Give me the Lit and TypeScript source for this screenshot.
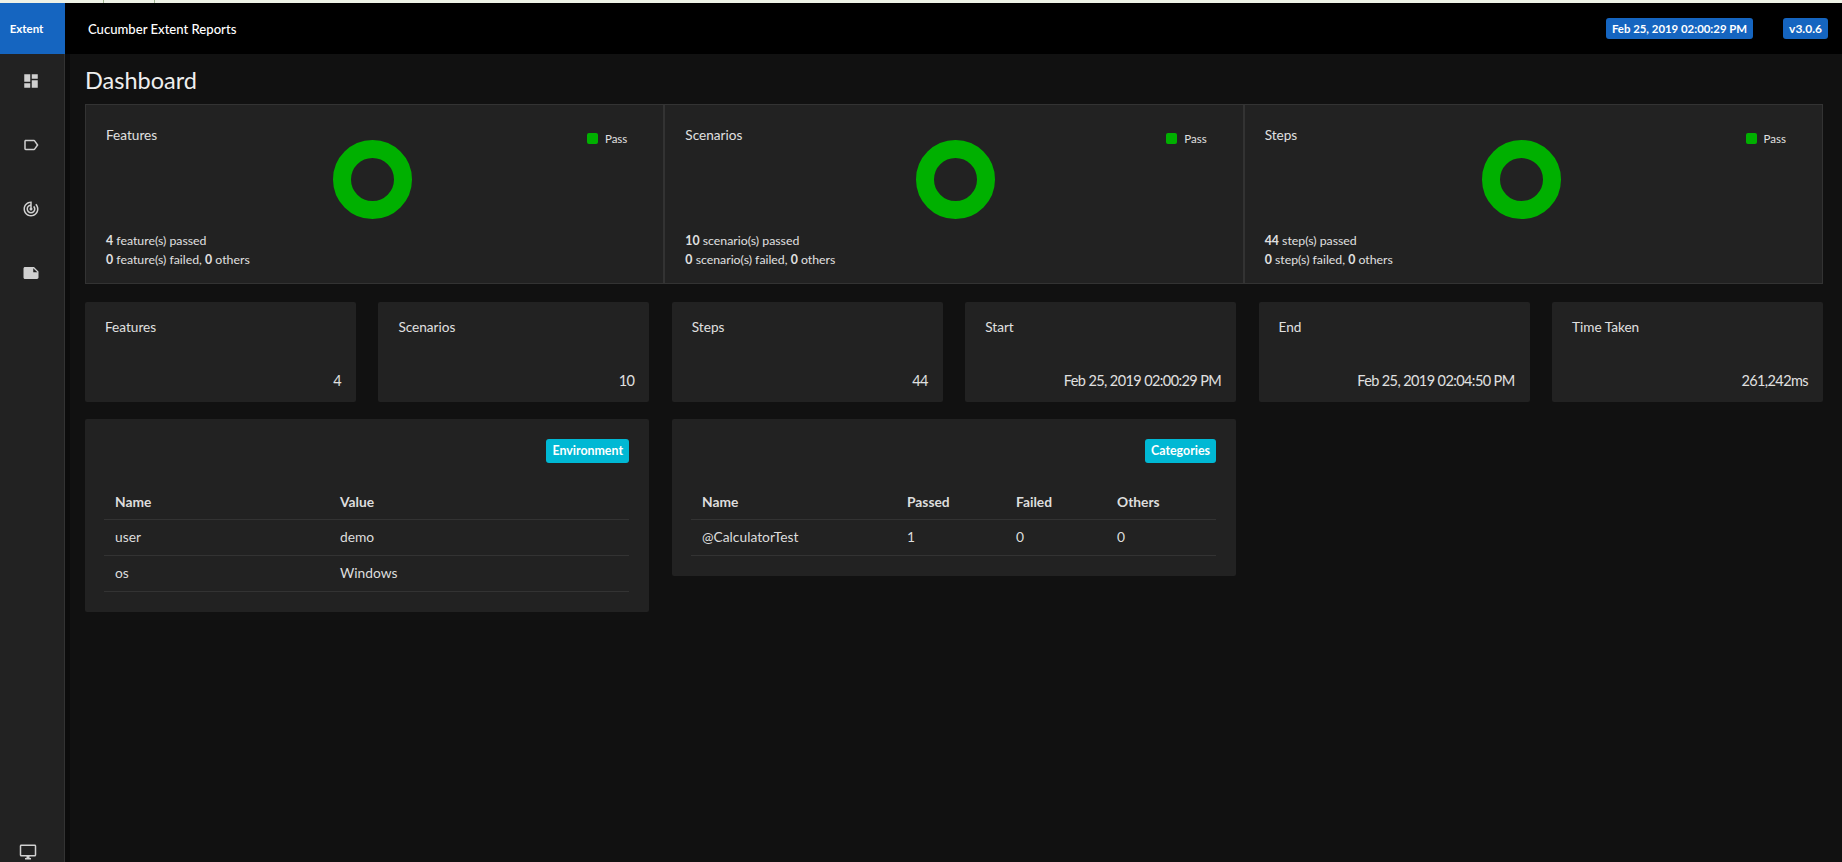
import { LitElement, html, css, svg } from "lit";
import { customElement } from "lit/decorators.js";

const ICONS = {
  dashboard: "M3 13h8V3H3v10zm0 8h8v-6H3v6zm10 0h8V11h-8v10zm0-18v6h8V3h-8z",
  label: "M17.63 5.84C17.27 5.33 16.67 5 16 5L5 5.01C3.9 5.01 3 5.9 3 7v10c0 1.1.9 1.99 2 1.99L16 19c.67 0 1.27-.33 1.63-.84L22 12l-4.37-6.16zM16 17H5V7h11l3.55 5L16 17z",
  track: "M19.07 4.93l-1.41 1.41C19.1 7.79 20 9.79 20 12c0 4.42-3.58 8-8 8s-8-3.58-8-8c0-4.08 3.05-7.44 7-7.93v2.02C8.16 6.57 6 9.03 6 12c0 3.31 2.69 6 6 6s6-2.69 6-6c0-1.66-.67-3.16-1.76-4.24l-1.41 1.41C15.55 9.9 16 10.9 16 12c0 2.21-1.79 4-4 4s-4-1.79-4-4c0-1.86 1.28-3.41 3-3.86v2.14c-.6.35-1 .98-1 1.72 0 1.1.9 2 2 2s2-.9 2-2c0-.74-.4-1.38-1-1.72V2h-1C6.48 2 2 6.48 2 12s4.48 10 10 10 10-4.48 10-10c0-2.76-1.12-5.26-2.93-7.07z",
  note: "M22 10l-6-6H4c-1.1 0-2 .9-2 2v12.01c0 1.1.9 1.99 2 1.99l16-.01c1.1 0 2-.89 2-1.99v-8zm-7-4.5l5.5 5.5H15V5.5z",
  desktop: "M21 2H3c-1.1 0-2 .9-2 2v12c0 1.1.9 2 2 2h7v2H8v2h8v-2h-2v-2h7c1.1 0 2-.9 2-2V4c0-1.1-.9-2-2-2zm0 14H3V4h18v12z",
};

const icon = (d: string, size = 18) =>
  html`<svg class="icon" width=${size} height=${size} viewBox="0 0 24 24">${svg`<path d=${d}></path>`}</svg>`;

const CHARTS = [
  { title: "Features", n: "4", noun: "feature", donut: 227 },
  { title: "Scenarios", n: "10", noun: "scenario", donut: 231 },
  { title: "Steps", n: "44", noun: "step", donut: 217 },
];

const STATS = [
  ["Features", "4"],
  ["Scenarios", "10"],
  ["Steps", "44"],
  ["Start", "Feb 25, 2019 02:00:29 PM"],
  ["End", "Feb 25, 2019 02:04:50 PM"],
  ["Time Taken", "261,242ms"],
];

@customElement("app-root")
export class AppRoot extends LitElement {
  static styles = css`
    :host {
      display: flex;
      flex-direction: column;
      width: 1842px;
      height: 862px;
      overflow: hidden;
      background: #111;
      color: #e0e0e0;
      font-family: "Lato", "Noto Sans", sans-serif;
      font-size: 13px;
    }
    .strip {
      height: 3px;
      background: #eef2e6;
      display: flex;
      padding-left: 103px;
      gap: 50px;
      flex: none;
    }
    .strip i {
      width: 1px;
      background: #9fb592;
    }
    .top {
      height: 51px;
      flex: none;
      background: #000;
      display: flex;
      align-items: center;
    }
    .logo {
      width: 65px;
      height: 51px;
      box-sizing: border-box;
      padding-right: 12px;
      background: #1565c0;
      color: #fff;
      font-weight: 700;
      font-size: 11.5px;
      display: flex;
      align-items: center;
      justify-content: center;
    }
    .brand {
      margin-left: 23px;
      color: #fff;
      font-size: 13.1px;
      font-weight: 500;
      flex: 1;
    }
    .pill {
      background: #1565c0;
      color: #fff;
      font-weight: 700;
      font-size: 11.4px;
      height: 21px;
      line-height: 21px;
      border-radius: 3px;
      padding: 0 6px;
    }
    .pill.ver {
      margin: 0 14px 0 30px;
      font-size: 12px;
    }
    .body {
      flex: 1;
      display: flex;
      min-height: 0;
    }
    .side {
      flex: none;
      background: #222;
      border-right: 1px solid #333;
      box-shadow: 5px 0 0 #0c0c0c;
      display: flex;
      flex-direction: column;
      align-items: center;
      padding: 18px 3px 0 0;
      width: 61px;
    }
    .side .item {
      height: 18px;
      margin-bottom: 46px;
      display: flex;
    }
    .side .item.end {
      margin: auto 6px 2px 0;
      height: 17px;
    }
    .icon {
      fill: #d0d0d0;
      display: block;
    }
    main {
      flex: 1;
      min-width: 0;
      padding: 0 19px 0 20px;
    }
    h1 {
      margin: 0;
      font-size: 23.5px;
      font-weight: 400;
      color: #eee;
      height: 50px;
      line-height: 53px;
    }
    .charts {
      display: grid;
      grid-template-columns: repeat(3, 1fr);
    }
    .chart {
      height: 180px;
      box-sizing: border-box;
      background: #222;
      border: 1px solid #333;
      padding: 20px 20px 14px;
      display: grid;
    }
    .chart > * {
      grid-area: 1 / 1;
    }
    .ctitle {
      font-size: 13.6px;
      line-height: 20px;
    }
    .legend {
      justify-self: end;
      display: flex;
      align-items: center;
      gap: 7px;
      font-size: 11.5px;
      height: 20px;
      margin: 3px 16px 0 0;
      align-self: start;
    }
    .legend b {
      width: 11px;
      height: 11px;
      border-radius: 2px;
      background: #00b000;
    }
    .donut {
      align-self: start;
      justify-self: start;
      box-sizing: border-box;
      width: 79px;
      height: 79px;
      margin-top: 15px;
      border-radius: 50%;
      border: 18px solid #00b000;
    }
    .foot {
      align-self: end;
      font-size: 12.3px;
      line-height: 19px;
    }
    .foot strong {
      font-weight: 700;
    }
    .stats {
      display: grid;
      grid-template-columns: repeat(6, 1fr);
      column-gap: 22.4px;
      margin-top: 18px;
    }
    .stat {
      height: 100px;
      box-sizing: border-box;
      background: #222;
      border-radius: 2px;
      padding: 15px 15px 0 20px;
      display: flex;
      flex-direction: column;
      justify-content: space-between;
    }
    .stat .t {
      font-size: 13.6px;
      line-height: 20px;
    }
    .stat .v {
      text-align: right;
      font-size: 14.5px;
      letter-spacing: -0.6px;
      line-height: 20px;
      margin-bottom: 11px;
    }
    .panels {
      display: grid;
      grid-template-columns: 564px 564px;
      column-gap: 23px;
      margin-top: 17px;
      align-items: start;
    }
    .panel {
      background: #222;
      border-radius: 2px;
      padding: 20px 20px 20px 19px;
    }
    .phead {
      display: flex;
      justify-content: flex-end;
    }
    .badge {
      background: #00b8d4;
      color: #fff;
      font-weight: 700;
      font-size: 12.4px;
      height: 24px;
      line-height: 24px;
      padding: 0 6px;
      border-radius: 3px;
    }
    table {
      width: 100%;
      border-collapse: collapse;
      table-layout: fixed;
      margin-top: 20px;
      font-size: 13.8px;
    }
    th,
    td {
      text-align: left;
      padding: 0 11px;
      border-bottom: 1px solid #333;
      color: #ddd;
    }
    th {
      height: 36px;
      font-weight: 700;
      padding-top: 2px;
      box-sizing: border-box;
    }
    td {
      height: 36px;
      padding-bottom: 1px;
      box-sizing: border-box;
    }
  `;

  render() {
    return html`
      <div class="strip"><i></i><i></i></div>
      <header class="top">
        <div class="logo">Extent</div>
        <div class="brand">Cucumber Extent Reports</div>
        <div class="pill">Feb 25, 2019 02:00:29 PM</div>
        <div class="pill ver">v3.0.6</div>
      </header>
      <div class="body">
        <nav class="side">
          <div class="item">${icon(ICONS.dashboard)}</div>
          <div class="item">${icon(ICONS.label)}</div>
          <div class="item">${icon(ICONS.track)}</div>
          <div class="item">${icon(ICONS.note)}</div>
          <div class="item end">${icon(ICONS.desktop)}</div>
        </nav>
        <main>
          <h1>Dashboard</h1>
          <section class="charts">
            ${CHARTS.map(
              (c) => html`
                <div class="chart">
                  <div class="ctitle">${c.title}</div>
                  <div class="legend"><b></b>Pass</div>
                  <div class="donut" style="margin-left:${c.donut}px"></div>
                  <div class="foot">
                    <div><strong>${c.n}</strong> ${c.noun}(s) passed</div>
                    <div><strong>0</strong> ${c.noun}(s) failed, <strong>0</strong> others</div>
                  </div>
                </div>
              `
            )}
          </section>
          <section class="stats">
            ${STATS.map(
              ([t, v]) => html`<div class="stat"><div class="t">${t}</div><div class="v">${v}</div></div>`
            )}
          </section>
          <section class="panels">
            <div class="panel">
              <div class="phead"><span class="badge">Environment</span></div>
              <table>
                <colgroup><col style="width:225px" /><col /></colgroup>
                <tr><th>Name</th><th>Value</th></tr>
                <tr><td>user</td><td>demo</td></tr>
                <tr><td>os</td><td>Windows</td></tr>
              </table>
            </div>
            <div class="panel">
              <div class="phead"><span class="badge">Categories</span></div>
              <table>
                <colgroup><col style="width:205px" /><col style="width:109px" /><col style="width:101px" /><col /></colgroup>
                <tr><th>Name</th><th>Passed</th><th>Failed</th><th>Others</th></tr>
                <tr><td>@CalculatorTest</td><td>1</td><td>0</td><td>0</td></tr>
              </table>
            </div>
          </section>
        </main>
      </div>
    `;
  }
}
